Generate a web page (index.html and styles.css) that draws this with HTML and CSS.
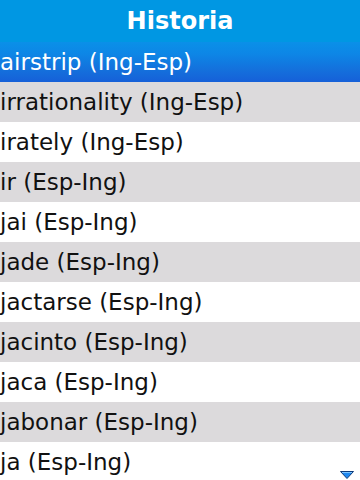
FILE: index.html
```html
<!DOCTYPE html>
<html>
<head>
<meta charset="utf-8">
<link rel="stylesheet" href="styles.css">
</head>
<body>
<div class="screen">
  <header class="title">Historia</header>
  <ul class="list">
    <li class="row selected">airstrip (Ing-Esp)</li>
    <li class="row alt">irrationality (Ing-Esp)</li>
    <li class="row">irately (Ing-Esp)</li>
    <li class="row alt">ir (Esp-Ing)</li>
    <li class="row">jai (Esp-Ing)</li>
    <li class="row alt">jade (Esp-Ing)</li>
    <li class="row">jactarse (Esp-Ing)</li>
    <li class="row alt">jacinto (Esp-Ing)</li>
    <li class="row">jaca (Esp-Ing)</li>
    <li class="row alt">jabonar (Esp-Ing)</li>
    <li class="row">ja (Esp-Ing)</li>
  </ul>
  <svg class="more" width="14" height="8" viewBox="0 0 14 8">
    <path d="M0.5 0.5 H13.5 L7 7.5 Z" fill="#1e88f0" stroke="#0d3a7a" stroke-width="1"/>
    <path d="M2 1.5 H12" stroke="#7cc4ff" stroke-width="1"/>
  </svg>
</div>
</body>
</html>
```
FILE: styles.css
```css
html, body {
  margin: 0;
  padding: 0;
  background: #ffffff;
}
.screen {
  position: relative;
  width: 360px;
  height: 480px;
  overflow: hidden;
  font-family: "DejaVu Sans", sans-serif;
}
.title {
  height: 42px;
  line-height: 42px;
  background: #0097e3;
  color: #ffffff;
  font-weight: bold;
  font-size: 24px;
  text-align: center;
}
.list {
  list-style: none;
  margin: 0;
  padding: 0;
}
.row {
  height: 40px;
  line-height: 40px;
  font-size: 23px;
  color: #111111;
  background: #ffffff;
  padding-left: 0;
  white-space: nowrap;
}
.row.alt {
  background: #dcdadc;
}
.row.selected {
  background: linear-gradient(to bottom, #0a90e8 0%, #0d86e6 30%, #1470dc 70%, #1660d8 100%);
  color: #ffffff;
}
.more {
  position: absolute;
  left: 340px;
  top: 471px;
}
```
